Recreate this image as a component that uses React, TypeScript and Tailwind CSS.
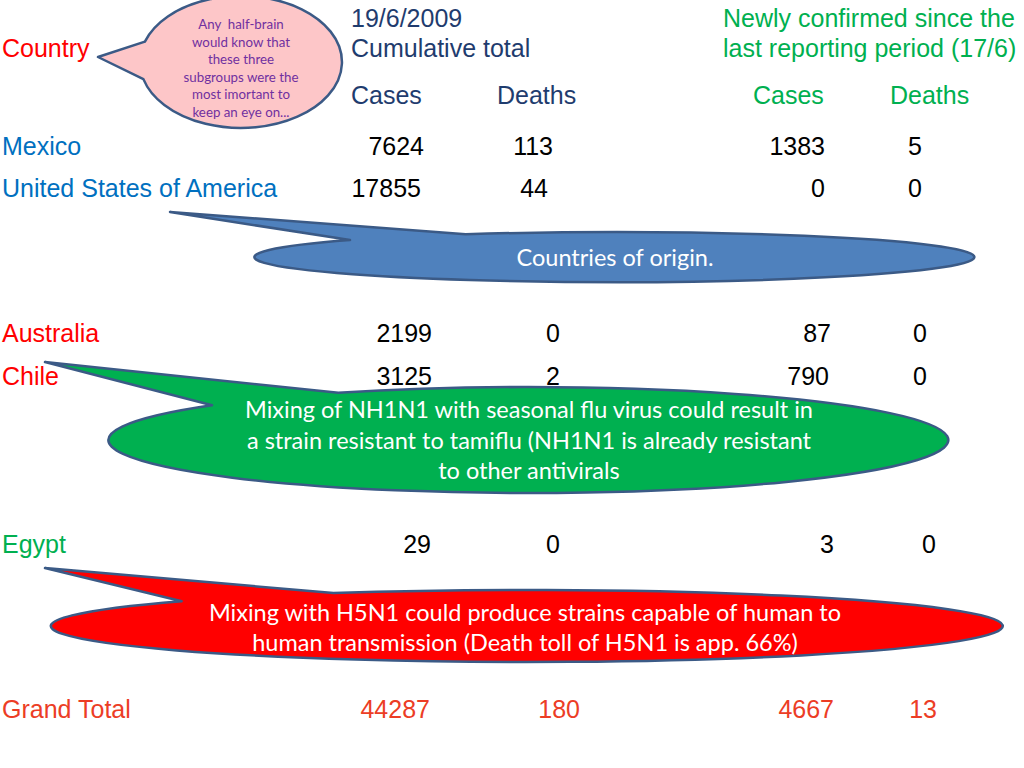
import React from 'react';

interface CalloutProps {
  cx: number;
  cy: number;
  rx: number;
  ry: number;
  tip: [number, number];
  a1: number;
  a2: number;
  fill: string;
}

function pt(cx: number, cy: number, rx: number, ry: number, deg: number) {
  const r = (deg * Math.PI) / 180;
  return `${(cx + rx * Math.cos(r)).toFixed(1)} ${(cy + ry * Math.sin(r)).toFixed(1)}`;
}

// ellipse with a wedge tail, drawn as one path so the outline runs round the tail
function CalloutShape({ cx, cy, rx, ry, tip, a1, a2, fill }: CalloutProps) {
  const d = `M ${pt(cx, cy, rx, ry, a1)} L ${tip[0]} ${tip[1]} L ${pt(cx, cy, rx, ry, a2)} A ${rx} ${ry} 0 1 1 ${pt(cx, cy, rx, ry, a1)} Z`;
  return (
    <svg className="absolute inset-0 pointer-events-none" width={1024} height={768}>
      <path d={d} fill={fill} stroke="#3b5a86" strokeWidth={2.5} strokeLinejoin="round" />
    </svg>
  );
}

interface RowProps {
  name: string;
  nameColor: string;
  cells: { value: string; w: string }[];
  numColor: string;
  className: string;
}

function Row({ name, nameColor, cells, numColor, className }: RowProps) {
  return (
    <div className={`flex leading-[30px] ${className}`}>
      <div className={`w-[340px] shrink-0 pl-[2px] ${nameColor}`}>{name}</div>
      {cells.map((c, i) => (
        <div key={i} className={`shrink-0 text-right ${c.w} ${numColor}`}>
          {c.value}
        </div>
      ))}
    </div>
  );
}

const calloutFont = { fontFamily: 'Lato, "Open Sans", sans-serif' };

export default function App() {
  return (
    <div
      className="relative w-[1024px] h-[768px] overflow-hidden bg-white text-[25px]"
      style={{ fontFamily: '"Liberation Sans", Arial, sans-serif' }}
    >
      <div className="flex pt-[3px] leading-[30px]">
        <div className="w-[351px] shrink-0 pt-[30px] pl-[2px] text-[#ff0000]">Country</div>
        <div className="w-[372px] shrink-0 text-[#1f3c6e]">
          <div>19/6/2009</div>
          <div>Cumulative total</div>
        </div>
        <div className="text-[#00b050]">
          <div>Newly confirmed since the</div>
          <div>last reporting period (17/6)</div>
        </div>
      </div>

      <div className="flex mt-[17px] leading-[30px]">
        <div className="w-[351px] shrink-0" />
        <div className="w-[146px] shrink-0 text-[#1f3c6e]">Cases</div>
        <div className="w-[256px] shrink-0 text-[#1f3c6e]">Deaths</div>
        <div className="w-[137px] shrink-0 text-[#00b050]">Cases</div>
        <div className="text-[#00b050]">Deaths</div>
      </div>

      <Row
        className="mt-[21px]"
        name="Mexico"
        nameColor="text-[#0070c0]"
        numColor="text-black"
        cells={[
          { value: '7624', w: 'w-[84px]' },
          { value: '113', w: 'w-[129px]' },
          { value: '1383', w: 'w-[272px]' },
          { value: '5', w: 'w-[97px]' },
        ]}
      />
      <Row
        className="mt-[12px]"
        name="United States of America"
        nameColor="text-[#0070c0]"
        numColor="text-black"
        cells={[
          { value: '17855', w: 'w-[81px]' },
          { value: '44', w: 'w-[127px]' },
          { value: '0', w: 'w-[277px]' },
          { value: '0', w: 'w-[97px]' },
        ]}
      />
      <Row
        className="mt-[115px]"
        name="Australia"
        nameColor="text-[#ff0000]"
        numColor="text-black"
        cells={[
          { value: '2199', w: 'w-[92px]' },
          { value: '0', w: 'w-[128px]' },
          { value: '87', w: 'w-[271px]' },
          { value: '0', w: 'w-[96px]' },
        ]}
      />
      <Row
        className="mt-[13px]"
        name="Chile"
        nameColor="text-[#ff0000]"
        numColor="text-black"
        cells={[
          { value: '3125', w: 'w-[92px]' },
          { value: '2', w: 'w-[128px]' },
          { value: '790', w: 'w-[269px]' },
          { value: '0', w: 'w-[98px]' },
        ]}
      />
      <Row
        className="mt-[138px]"
        name="Egypt"
        nameColor="text-[#00b050]"
        numColor="text-black"
        cells={[
          { value: '29', w: 'w-[91px]' },
          { value: '0', w: 'w-[129px]' },
          { value: '3', w: 'w-[274px]' },
          { value: '0', w: 'w-[102px]' },
        ]}
      />
      <Row
        className="mt-[135px]"
        name="Grand Total"
        nameColor="text-[#ec3d25]"
        numColor="text-[#ec3d25]"
        cells={[
          { value: '44287', w: 'w-[90px]' },
          { value: '180', w: 'w-[150px]' },
          { value: '4667', w: 'w-[254px]' },
          { value: '13', w: 'w-[103px]' },
        ]}
      />

      {/* callouts */}
      <CalloutShape cx={241} cy={62} rx={101} ry={66} tip={[98, 57]} a1={165} a2={198} fill="#fdc6c8" />
      <div
        className="absolute left-[166px] top-[16px] w-[150px] text-center text-[13.3px] leading-[17.5px] text-[#7030a0]"
        style={calloutFont}
      >
        Any&nbsp; half-brain
        <br />
        would know that
        <br />
        these three
        <br />
        subgroups were the
        <br />
        most imortant to
        <br />
        keep an eye on...
      </div>

      <CalloutShape cx={615} cy={257} rx={360} ry={25} tip={[170, 212]} a1={222.6} a2={245.5} fill="#4f81bd" />
      <div
        className="absolute left-[255px] top-[243px] w-[720px] text-center text-[23.5px] leading-[28px] text-white"
        style={calloutFont}
      >
        Countries of origin.
      </div>

      <CalloutShape cx={529} cy={440} rx={420} ry={53} tip={[45, 362]} a1={221} a2={243} fill="#00b050" />
      <div
        className="absolute left-[189px] top-[394px] w-[680px] text-center text-[23.5px] leading-[30.5px] text-white"
        style={calloutFont}
      >
        Mixing of NH1N1 with seasonal flu virus could result in
        <br />
        a strain resistant to tamiflu (NH1N1 is already resistant
        <br />
        to other antivirals
      </div>

      <CalloutShape cx={527} cy={626} rx={476} ry={36} tip={[45, 568]} a1={223.5} a2={246} fill="#ff0000" />
      <div
        className="absolute left-[135px] top-[597px] w-[780px] text-center text-[23.5px] leading-[30px] text-white"
        style={calloutFont}
      >
        Mixing with H5N1 could produce strains capable of human to
        <br />
        human transmission (Death toll of H5N1 is app. 66%)
      </div>
    </div>
  );
}
